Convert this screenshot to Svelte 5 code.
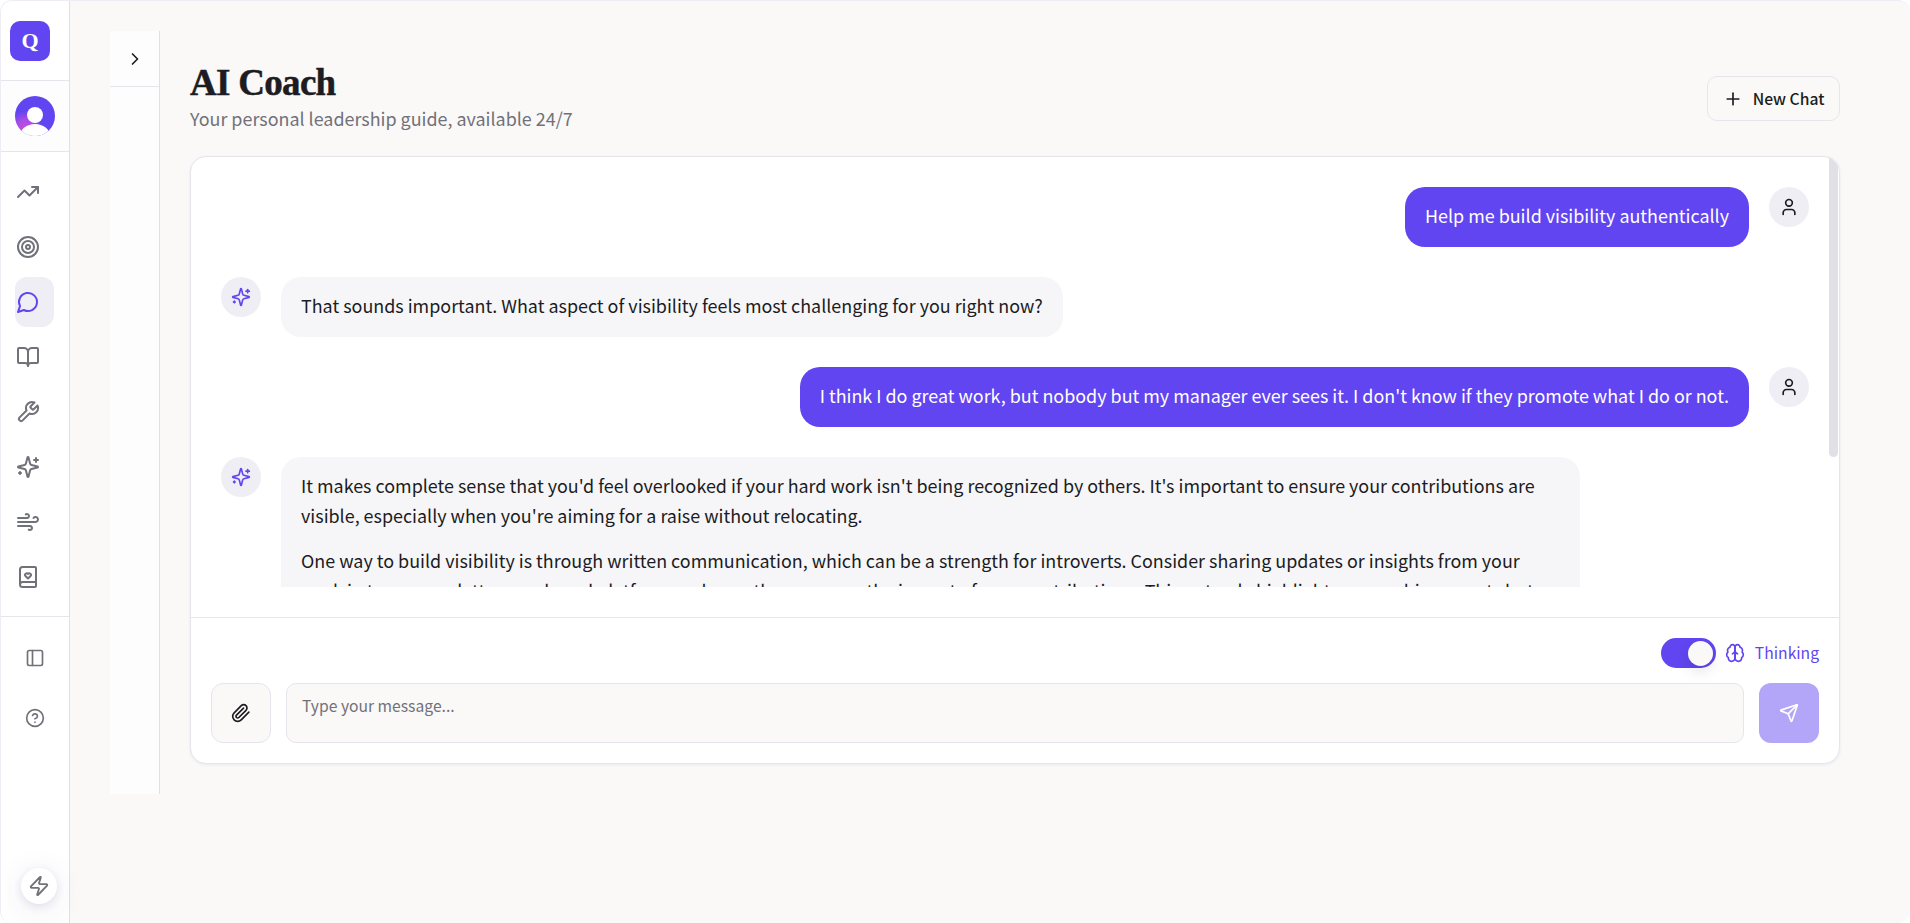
<script>
  const nav = [
    { d: ['M22 7 13.5 15.5 8.5 10.5 2 17', 'M16 7h6v6'] },
    { circles: [[12,12,10],[12,12,6],[12,12,2]] },
    { active: true, d: ['M7.9 20A9 9 0 1 0 4 16.1L2 22Z'] },
    { d: ['M12 7v14', 'M3 18a1 1 0 0 1-1-1V4a1 1 0 0 1 1-1h5a4 4 0 0 1 4 4 4 4 0 0 1 4-4h5a1 1 0 0 1 1 1v13a1 1 0 0 1-1 1h-6a3 3 0 0 0-3 3 3 3 0 0 0-3-3z'] },
    { d: ['M14.7 6.3a1 1 0 0 0 0 1.4l1.6 1.6a1 1 0 0 0 1.4 0l3.77-3.77a6 6 0 0 1-7.94 7.94l-6.91 6.91a2.12 2.12 0 0 1-3-3l6.91-6.91a6 6 0 0 1 7.94-7.94l-3.76 3.76z'] },
    { d: ['M9.937 15.5A2 2 0 0 0 8.5 14.063l-6.135-1.582a.5.5 0 0 1 0-.962L8.5 9.936A2 2 0 0 0 9.937 8.5l1.582-6.135a.5.5 0 0 1 .963 0L14.063 8.5A2 2 0 0 0 15.5 9.937l6.135 1.581a.5.5 0 0 1 0 .964L15.5 14.063a2 2 0 0 0-1.437 1.437l-1.582 6.135a.5.5 0 0 1-.963 0z', 'M20 3v4', 'M22 5h-4', 'M4 17v2', 'M5 18H3'] },
    { d: ['M12.8 19.6A2 2 0 1 0 14 16H2', 'M17.5 8a2.5 2.5 0 1 1 2 4H2', 'M9.8 4.4A2 2 0 1 1 11 8H2'] },
    { d: ['M4 19.5v-15A2.5 2.5 0 0 1 6.5 2H19a1 1 0 0 1 1 1v18a1 1 0 0 1-1 1H6.5a1 1 0 0 1 0-5H20', 'M12 13.5l-2.6-2.5a1.6 1.6 0 0 1 2.6-2 1.6 1.6 0 0 1 2.6 2z'] }
  ];
  const sparkle = ['M9.937 15.5A2 2 0 0 0 8.5 14.063l-6.135-1.582a.5.5 0 0 1 0-.962L8.5 9.936A2 2 0 0 0 9.937 8.5l1.582-6.135a.5.5 0 0 1 .963 0L14.063 8.5A2 2 0 0 0 15.5 9.937l6.135 1.581a.5.5 0 0 1 0 .964L15.5 14.063a2 2 0 0 0-1.437 1.437l-1.582 6.135a.5.5 0 0 1-.963 0z', 'M20 3v4', 'M22 5h-4', 'M4 17v2', 'M5 18H3'];
  const person = ['M19 21v-2a4 4 0 0 0-4-4H9a4 4 0 0 0-4 4v2'];
</script>

{#snippet aiAvatar()}
  <div class="avatar ai">
    <svg viewBox="0 0 24 24" width="20" height="20" class="ico">
      {#each sparkle as p}<path d={p} />{/each}
    </svg>
  </div>
{/snippet}

{#snippet userAvatar()}
  <div class="avatar user">
    <svg viewBox="0 0 24 24" width="20" height="20" class="ico">
      <path d={person[0]} /><circle cx="12" cy="7" r="4" />
    </svg>
  </div>
{/snippet}

<div class="page">
  <aside class="rail">
    <div class="logo-wrap"><div class="logo">Q</div></div>
    <div class="profile">
      <div class="pic">
        <span class="head"></span>
        <span class="body"></span>
      </div>
    </div>
    <nav class="nav">
      {#each nav as item}
        <div class="nav-item" class:active={item.active}>
          <svg viewBox="0 0 24 24" width="24" height="24" class="ico">
            {#each item.d ?? [] as p}<path d={p} />{/each}
            {#each item.circles ?? [] as c}<circle cx={c[0]} cy={c[1]} r={c[2]} />{/each}
          </svg>
        </div>
      {/each}
    </nav>
    <div class="rail-tools">
      <svg viewBox="0 0 24 24" width="20" height="20" class="ico tool">
        <rect x="3" y="3" width="18" height="18" rx="2" /><path d="M9 3v18" />
      </svg>
      <svg viewBox="0 0 24 24" width="20" height="20" class="ico tool">
        <circle cx="12" cy="12" r="10" /><path d="M9.09 9a3 3 0 0 1 5.83 1c0 2-3 3-3 3" /><path d="M12 17h.01" />
      </svg>
    </div>
    <div class="bolt">
      <svg viewBox="0 0 24 24" width="22" height="22" class="ico">
        <path d="M4 14a1 1 0 0 1-.78-1.63l9.9-10.2a.5.5 0 0 1 .86.46l-1.92 6.02A1 1 0 0 0 13 10h7a1 1 0 0 1 .78 1.63l-9.9 10.2a.5.5 0 0 1-.86-.46l1.92-6.02A1 1 0 0 0 11 14z" />
      </svg>
    </div>
  </aside>

  <div class="workspace">
    <div class="history">
      <div class="history-head">
        <svg viewBox="0 0 24 24" width="20" height="20" class="ico dark"><path d="m9 18 6-6-6-6" /></svg>
      </div>
    </div>

    <main class="main">
      <header class="header">
        <div>
          <h1>AI Coach</h1>
          <p class="sub">Your personal leadership guide, available 24/7</p>
        </div>
        <button class="new-chat">
          <svg viewBox="0 0 24 24" width="20" height="20" class="ico dark"><path d="M5 12h14" /><path d="M12 5v14" /></svg>
          <span>New Chat</span>
        </button>
      </header>

      <section class="card">
        <div class="messages">
          <div class="thumb"></div>
          <div class="scroller">
            <div class="row right">
              <div class="bubble me">Help me build visibility authentically</div>
              {@render userAvatar()}
            </div>
            <div class="row">
              {@render aiAvatar()}
              <div class="bubble bot">That sounds important. What aspect of visibility feels most challenging for you right now?</div>
            </div>
            <div class="row right">
              <div class="bubble me">I think I do great work, but nobody but my manager ever sees it. I don't know if they promote what I do or not.</div>
              {@render userAvatar()}
            </div>
            <div class="row">
              {@render aiAvatar()}
              <div class="bubble bot long">
                <p>It makes complete sense that you'd feel overlooked if your hard work isn't being recognized by others. It's important to ensure your contributions are visible, especially when you're aiming for a raise without relocating.</p>
                <p>One way to build visibility is through written communication, which can be a strength for introverts. Consider sharing updates or insights from your work in team newsletters or shared platforms, where others can see the impact of your contributions. This not only highlights your achievements but also positions you as a thoughtful contributor.</p>
              </div>
            </div>
          </div>
        </div>

        <div class="composer">
          <div class="thinking">
            <div class="switch"><span class="knob"></span></div>
            <svg viewBox="0 0 24 24" width="20" height="20" class="ico violet">
              <path d="M12 5a3 3 0 1 0-5.997.125 4 4 0 0 0-2.526 5.77 4 4 0 0 0 .556 6.588A4 4 0 1 0 12 18Z" />
              <path d="M12 5a3 3 0 1 1 5.997.125 4 4 0 0 1 2.526 5.77 4 4 0 0 1-.556 6.588A4 4 0 1 1 12 18Z" />
              <path d="M15 13a4.5 4.5 0 0 1-3-4 4.5 4.5 0 0 1-3 4" />
              <path d="M12 18V9" />
            </svg>
            <span class="label">Thinking</span>
          </div>
          <div class="input-row">
            <button class="attach" aria-label="Attach">
              <svg viewBox="0 0 24 24" width="20" height="20" class="ico dark">
                <path d="m21.44 11.05-9.19 9.19a6 6 0 0 1-8.49-8.49l8.57-8.57A4 4 0 1 1 18 8.84l-8.59 8.57a2 2 0 0 1-2.83-2.83l8.49-8.48" />
              </svg>
            </button>
            <div class="input">Type your message...</div>
            <button class="send" aria-label="Send">
              <svg viewBox="0 0 24 24" width="20" height="20" class="ico white">
                <path d="M14.536 21.686a.5.5 0 0 0 .937-.024l6.5-19a.496.496 0 0 0-.635-.635l-19 6.5a.5.5 0 0 0-.024.937l7.93 3.18a2 2 0 0 1 1.112 1.11z" />
                <path d="m21.854 2.147-10.94 10.939" />
              </svg>
            </button>
          </div>
        </div>
      </section>
    </main>
  </div>
</div>

<style>
  :global(body) {
    margin: 0;
    background: #fff;
    font-family: "Noto Sans CJK SC", "Noto Sans", sans-serif;
    color: #1c1c22;
  }
  .page {
    display: flex;
    height: 923px;
    overflow: hidden;
    background: #faf9f8;
    border-radius: 12px;
    border: 1px solid #eeedf3;
    box-sizing: border-box;
    border-bottom: 0;
    border-right: 0;
  }
  .ico {
    fill: none;
    stroke: currentColor;
    stroke-width: 2;
    stroke-linecap: round;
    stroke-linejoin: round;
    flex: none;
  }
  .dark { color: #1c1c22; }
  .violet { color: #6145f0; }
  .white { color: #fff; }

  .rail {
    position: relative;
    width: 69px;
    box-sizing: border-box;
    flex: none;
    background: #fff;
    border-right: 1px solid #e1e0e8;
    display: flex;
    flex-direction: column;
  }
  .logo-wrap {
    height: 80px;
    box-sizing: border-box;
    padding: 20px 0 0 9px;
    border-bottom: 1px solid #e6e5ec;
  }
  .logo {
    width: 40px;
    height: 40px;
    border-radius: 10px;
    background: #6145f0;
    color: #fff;
    font-family: "Liberation Serif", serif;
    font-weight: 700;
    font-size: 22px;
    display: flex;
    align-items: center;
    justify-content: center;
  }
  .profile {
    height: 71px;
    box-sizing: border-box;
    border-bottom: 1px solid #e6e5ec;
    background: #fdfdfd;
    display: flex;
    align-items: center;
    padding-left: 14px;
  }
  .pic {
    position: relative;
    width: 40px;
    height: 40px;
    border-radius: 50%;
    overflow: hidden;
    background: radial-gradient(circle at 25% 78%, #c04fe0 0, #a84ce6 18%, #6145f0 38%);
  }
  .head {
    position: absolute;
    left: 12px;
    top: 11px;
    width: 16px;
    height: 16px;
    border-radius: 50%;
    background: #fff;
  }
  .body {
    position: absolute;
    left: 5px;
    top: 28px;
    width: 30px;
    height: 24px;
    border-radius: 50%;
    background: #fff;
  }
  .nav {
    display: flex;
    flex-direction: column;
    align-items: flex-start;
    gap: 5px;
    padding: 15px 0 0 14px;
    border-bottom: 1px solid #e6e5ec;
    height: 465px;
    box-sizing: border-box;
  }
  .nav-item {
    width: 39px;
    height: 50px;
    flex: none;
    box-sizing: border-box;
    border-radius: 12px;
    color: #71717a;
    display: flex;
    align-items: center;
    justify-content: flex-start;
    padding-left: 1px;
  }
  .nav-item.active {
    background: #efeef5;
    color: #6145f0;
  }
  .rail-tools {
    display: flex;
    flex-direction: column;
    align-items: center;
    gap: 40px;
    padding-top: 31px;
    color: #71717a;
  }
  .bolt {
    position: absolute;
    left: 20px;
    top: 867px;
    width: 36px;
    height: 36px;
    border-radius: 50%;
    background: #fff;
    color: #71717a;
    display: flex;
    align-items: center;
    justify-content: center;
    box-shadow: 0 2px 8px rgba(60, 50, 120, 0.12), 0 6px 32px rgba(60, 50, 120, 0.1);
  }

  .workspace {
    flex: 1;
    display: flex;
    padding: 30px 70px 0 40px;
    min-width: 0;
  }
  .history {
    width: 49px;
    height: 763px;
    flex: none;
    background: #fdfdfd;
    border-right: 1px solid #e1e0e8;
  }
  .history-head {
    height: 55px;
    border-bottom: 1px solid #e6e5ec;
    display: flex;
    align-items: center;
    justify-content: center;
  }
  .main {
    flex: 1;
    min-width: 0;
    margin-left: 30px;
  }
  .header {
    height: 125px;
    display: flex;
    justify-content: space-between;
    align-items: flex-start;
  }
  h1 {
    margin: 33px 0 0;
    font-family: "Liberation Serif", serif;
    font-weight: 700;
    font-size: 37px;
    line-height: 38px;
    letter-spacing: -0.7px;
    color: #1c1c22;
    -webkit-text-stroke: 0.5px #1c1c22;
  }
  .sub {
    margin: 3px 0 0;
    font-size: 17.92px;
    line-height: 26px;
    color: #71717a;
  }
  .new-chat {
    margin-top: 45px;
    width: 133px;
    height: 45px;
    box-sizing: border-box;
    display: flex;
    align-items: center;
    justify-content: center;
    gap: 10px;
    border: 1px solid #e6e5ec;
    border-radius: 10px;
    background: #faf9f8;
    color: #1c1c22;
    font: 500 15.68px "Noto Sans CJK SC", sans-serif;
    padding: 0;
  }
  .card {
    height: 608px;
    box-sizing: border-box;
    background: #fff;
    border: 1px solid #e6e5ec;
    border-radius: 16px;
    box-shadow: 0 1px 3px rgba(60, 50, 120, 0.08);
    display: flex;
    flex-direction: column;
    overflow: hidden;
  }
  .messages {
    position: relative;
    height: 460px;
    flex: none;
    padding-bottom: 30px;
    box-sizing: border-box;
  }
  .scroller {
    height: 430px;
    overflow: hidden;
    padding: 30px 30px 0 30px;
    box-sizing: border-box;
    display: flex;
    flex-direction: column;
    gap: 30px;
  }
  .thumb {
    position: absolute;
    right: 1px;
    top: 0;
    width: 9px;
    height: 300px;
    background: #e0e0e6;
    border-radius: 0 0 5px 5px;
  }
  .row {
    display: flex;
    align-items: flex-start;
    gap: 20px;
    flex: none;
  }
  .row.right { justify-content: flex-end; }
  .avatar {
    width: 40px;
    height: 40px;
    border-radius: 50%;
    background: #efeef5;
    display: flex;
    align-items: center;
    justify-content: center;
    flex: none;
  }
  .avatar.ai { color: #6145f0; }
  .bubble {
    padding: 13px 20px 17px;
    font-size: 17.92px;
    line-height: 30px;
    border-radius: 20px;
    box-sizing: border-box;
  }
  .me { background: #6145f0; color: #fff; }
  .bot { background: #f6f6f9; color: #1c1c22; }
  .long { width: 1299px; flex: none; }
  .long p { margin: 0 0 15px; }
  .composer {
    flex: 1;
    border-top: 1px solid #e6e5ec;
    padding: 20px 20px 0;
    box-sizing: border-box;
  }
  .thinking {
    display: flex;
    justify-content: flex-end;
    align-items: center;
    gap: 10px;
    height: 30px;
    color: #6145f0;
    font-size: 15.68px;
  }
  .thinking svg { margin-left: -1px; }
  .label { margin-top: -2px; }
  .switch {
    width: 55px;
    height: 30px;
    border-radius: 15px;
    background: #6145f0;
    position: relative;
  }
  .knob {
    position: absolute;
    right: 2.5px;
    top: 2.5px;
    width: 25px;
    height: 25px;
    border-radius: 50%;
    background: #faf9f8;
    box-shadow: 0 6px 14px rgba(0, 0, 0, 0.1);
  }
  .input-row {
    display: flex;
    gap: 15px;
    margin-top: 15px;
  }
  .attach, .send {
    width: 60px;
    height: 60px;
    border-radius: 12px;
    flex: none;
    display: flex;
    align-items: center;
    justify-content: center;
    padding: 0;
    box-sizing: border-box;
  }
  .attach {
    background: #faf9f8;
    border: 1px solid #e6e5ec;
  }
  .send {
    background: #b3a5f8;
    border: 0;
  }
  .input {
    flex: 1;
    height: 60px;
    box-sizing: border-box;
    background: #faf9f8;
    border: 1px solid #e6e5ec;
    border-radius: 10px;
    padding: 10px 15px;
    font-size: 15.68px;
    line-height: 24px;
    color: #71717a;
  }
</style>
